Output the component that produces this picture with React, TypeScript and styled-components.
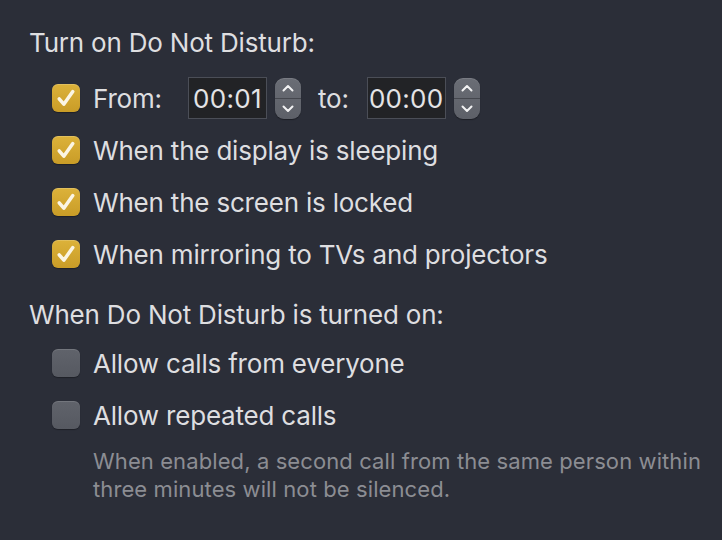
import React from "react";
import styled, { createGlobalStyle } from "styled-components";

const Global = createGlobalStyle`
  html, body {
    margin: 0;
    padding: 0;
    background: #2b2e38;
  }
  body {
    width: 722px;
    height: 540px;
    overflow: hidden;
    font-family: Inter, "Noto Sans", sans-serif;
    -webkit-font-smoothing: antialiased;
  }
`;

const Panel = styled.div`
  display: flex;
  flex-direction: column;
  padding: 28px 0 0 29px;
  color: #dedee0;
`;

const SectionTitle = styled.div<{ $top?: number }>`
  font-size: 26px;
  line-height: 30px;
  height: 30px;
  margin-top: ${(p) => p.$top ?? 0}px;
  letter-spacing: -0.2px;
`;

const OptionList = styled.div<{ $top: number }>`
  display: flex;
  flex-direction: column;
  margin-top: ${(p) => p.$top}px;
  padding-left: 23px;
`;

const Row = styled.div`
  display: flex;
  align-items: center;
  height: 52px;
  font-size: 26px;
  letter-spacing: -0.2px;
`;

const Box = styled.span<{ $checked: boolean }>`
  flex: none;
  width: 28px;
  height: 28px;
  border-radius: 6px;
  margin-right: 13px;
  display: flex;
  align-items: center;
  justify-content: center;
  box-sizing: border-box;
  background: ${(p) =>
    p.$checked
      ? "linear-gradient(#dcb23a, #c99c27)"
      : "linear-gradient(#60636b, #565961)"};
  box-shadow: ${(p) =>
    p.$checked
      ? "inset 0 1px 0 rgba(255,255,255,0.18), 0 1px 1px rgba(0,0,0,0.3)"
      : "inset 0 1px 0 rgba(255,255,255,0.12), 0 1px 1px rgba(0,0,0,0.3)"};
`;

const Label = styled.span`
  white-space: nowrap;
`;

const FromLabel = styled.span`
  width: 95px;
  white-space: nowrap;
`;

const ToLabel = styled.span`
  white-space: nowrap;
  margin: 0 18px 0 17px;
`;

const TimeField = styled.span`
  flex: none;
  width: 79px;
  height: 42px;
  box-sizing: border-box;
  border: 1px solid #4b4e57;
  background: #222326;
  display: flex;
  align-items: center;
  justify-content: center;
  color: #e4e4e6;
  font-size: 26px;
  letter-spacing: 0.3px;
  margin-right: 8px;
`;

const Stepper = styled.span`
  flex: none;
  width: 26px;
  height: 41px;
  border-radius: 9px;
  background: linear-gradient(#6a6d75, #5d6068);
  box-shadow: inset 0 1px 0 rgba(255, 255, 255, 0.1), 0 1px 1px rgba(0, 0, 0, 0.35);
  display: flex;
  flex-direction: column;
  overflow: hidden;
`;

const StepHalf = styled.span<{ $bottom?: boolean }>`
  flex: 1;
  display: flex;
  align-items: center;
  justify-content: center;
  border-top: ${(p) => (p.$bottom ? "1px solid #45474e" : "none")};
`;

const Note = styled.div`
  margin-top: 6px;
  padding-left: 64px;
  font-size: 22px;
  line-height: 28px;
  color: #8c8d93;
  letter-spacing: 0.1px;
  white-space: nowrap;
`;

const Check = () => (
  <svg width="28" height="28" viewBox="0 0 28 28">
    <path
      d="M7.2 14.8 L11.8 20.2 L20.8 7.6"
      fill="none"
      stroke="#fbf5e4"
      strokeWidth="3.5"
      strokeLinecap="round"
      strokeLinejoin="round"
    />
  </svg>
);

const Chevron = ({ up }: { up?: boolean }) => (
  <svg width="12" height="8" viewBox="0 0 12 8">
    <path
      d={up ? "M1.5 6.5 L6 2 L10.5 6.5" : "M1.5 1.5 L6 6 L10.5 1.5"}
      fill="none"
      stroke="#f2f2f3"
      strokeWidth="2"
      strokeLinecap="round"
      strokeLinejoin="round"
    />
  </svg>
);

const CheckBox = ({ checked }: { checked: boolean }) => (
  <Box $checked={checked}>{checked && <Check />}</Box>
);

const TimeStepper = () => (
  <Stepper>
    <StepHalf>
      <Chevron up />
    </StepHalf>
    <StepHalf $bottom>
      <Chevron />
    </StepHalf>
  </Stepper>
);

export default function App() {
  return (
    <>
      <Global />
      <Panel>
        <SectionTitle>Turn on Do Not Disturb:</SectionTitle>
        <OptionList $top={14}>
          <Row>
            <CheckBox checked />
            <FromLabel>From:</FromLabel>
            <TimeField>00:01</TimeField>
            <TimeStepper />
            <ToLabel>to:</ToLabel>
            <TimeField>00:00</TimeField>
            <TimeStepper />
          </Row>
          <Row>
            <CheckBox checked />
            <Label>When the display is sleeping</Label>
          </Row>
          <Row>
            <CheckBox checked />
            <Label>When the screen is locked</Label>
          </Row>
          <Row>
            <CheckBox checked />
            <Label>When mirroring to TVs and projectors</Label>
          </Row>
        </OptionList>
        <SectionTitle $top={20}>When Do Not Disturb is turned on:</SectionTitle>
        <OptionList $top={7}>
          <Row>
            <CheckBox checked={false} />
            <Label>Allow calls from everyone</Label>
          </Row>
          <Row>
            <CheckBox checked={false} />
            <Label>Allow repeated calls</Label>
          </Row>
        </OptionList>
        <Note>
          When enabled, a second call from the same person within
          <br />
          three minutes will not be silenced.
        </Note>
      </Panel>
    </>
  );
}
